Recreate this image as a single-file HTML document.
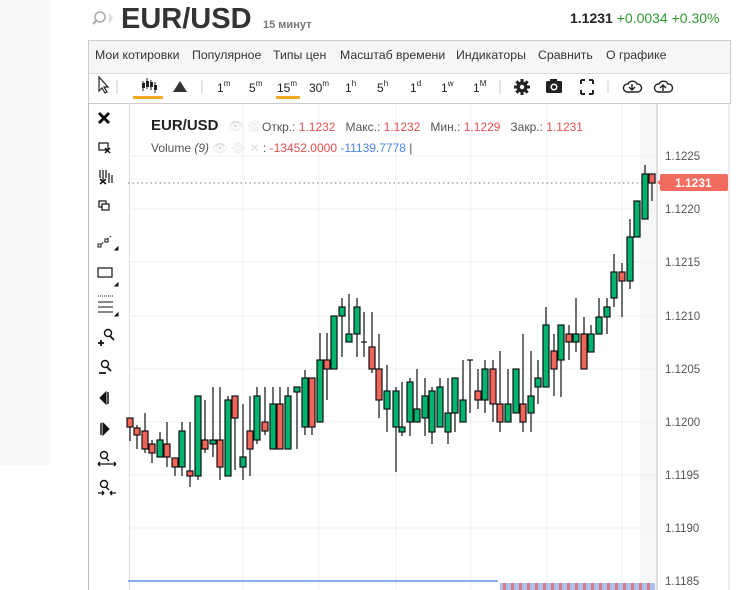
<!DOCTYPE html>
<html><head><meta charset="utf-8"><style>
body{margin:0;width:751px;height:590px;overflow:hidden;background:#fff;font-family:"Liberation Sans",sans-serif;position:relative}
.a{position:absolute;white-space:nowrap}
.m{position:absolute;top:48px;font-size:12.3px;color:#333;white-space:nowrap}
</style></head><body>
<div class="a" style="left:0;top:0;width:51px;height:465px;background:#f8f8f8"></div>
<svg class="a" style="left:92px;top:9px" width="30" height="20"><circle cx="8" cy="8" r="5" fill="none" stroke="#aaa" stroke-width="1.5"/><line x1="4.5" y1="11.5" x2="1" y2="15" stroke="#aaa" stroke-width="2"/><path d="M17 3 L21 9 L17 15 Z" fill="#ddd"/></svg>
<div class="a" style="left:121px;top:3px;font-size:29px;font-weight:bold;color:#333">EUR/USD</div>
<div class="a" style="left:263px;top:19px;font-size:11px;font-weight:bold;color:#777">15 минут</div>
<div class="a" style="left:570px;top:10px;font-size:14px;font-weight:bold;color:#222">1.1231 <span style="font-weight:normal;color:#2e9b2e">+0.0034 +0.30%</span></div>
<div class="a" style="left:88px;top:40px;width:641px;height:32px;background:#f6f6f6;border:1px solid #ccc;border-bottom:1px solid #ddd"></div>
<div class="m" style="left:95px">Мои котировки</div>
<div class="m" style="left:192px">Популярное</div>
<div class="m" style="left:273px">Типы цен</div>
<div class="m" style="left:340px">Масштаб времени</div>
<div class="m" style="left:456px">Индикаторы</div>
<div class="m" style="left:538px">Сравнить</div>
<div class="m" style="left:606px">О графике</div>
<div class="a" style="left:88px;top:73px;width:641px;height:30px;border-left:1px solid #ccc;border-right:1px solid #ccc;border-bottom:1px solid #ccc"></div>
<div class="a" style="left:88px;top:103px;width:40px;height:487px;border-left:1px solid #bbb;border-right:1px solid #ddd"></div>
<svg class="a" style="left:0;top:72px" width="751" height="32">
<path d="M99 5 L99 19 L102 16 L105 21 L107 20 L104 15 L108 15 Z" fill="#fff" stroke="#222" stroke-width="1.2"/>
<g stroke="#ccc"><line x1="117" y1="8" x2="117" y2="22"/><line x1="202" y1="8" x2="202" y2="22"/><line x1="500" y1="8" x2="500" y2="22"/><line x1="608" y1="8" x2="608" y2="22"/></g>
<g stroke="#222"><line x1="143" y1="9" x2="143" y2="19"/><line x1="147" y1="6" x2="147" y2="17"/><line x1="151" y1="8" x2="151" y2="18"/><line x1="155" y1="10" x2="155" y2="21"/></g>
<g fill="#222"><rect x="142" y="11" width="3" height="5"/><rect x="146" y="9" width="3" height="6"/><rect x="150" y="10" width="3" height="5"/><rect x="154" y="13" width="3" height="5"/></g>
<rect x="133" y="24" width="30" height="3" fill="#f5a623"/>
<path d="M173 20 L180 9 L187 20 Z" fill="#333"/>
<rect x="276" y="24" width="24" height="3" fill="#f5a623"/>
<g font-size="12" fill="#222" font-family="Liberation Sans"><text x="217" y="20">1<tspan font-size="8" dy="-6">m</tspan></text><text x="249" y="20">5<tspan font-size="8" dy="-6">m</tspan></text><text x="277" y="20">15<tspan font-size="8" dy="-6">m</tspan></text><text x="309" y="20">30<tspan font-size="8" dy="-6">m</tspan></text><text x="345" y="20">1<tspan font-size="8" dy="-6">h</tspan></text><text x="377" y="20">5<tspan font-size="8" dy="-6">h</tspan></text><text x="410" y="20">1<tspan font-size="8" dy="-6">d</tspan></text><text x="441" y="20">1<tspan font-size="8" dy="-6">w</tspan></text><text x="473" y="20">1<tspan font-size="8" dy="-6">M</tspan></text></g>
<g fill="#222"><circle cx="522" cy="15" r="5.5"/><rect x="520.5" y="7" width="3" height="16"/><rect x="514" y="13.5" width="16" height="3"/><rect x="520.5" y="7" width="3" height="16" transform="rotate(45 522 15)"/><rect x="520.5" y="7" width="3" height="16" transform="rotate(-45 522 15)"/></g><circle cx="522" cy="15" r="2.2" fill="#fff"/>
<rect x="546" y="9" width="16" height="12" rx="1.5" fill="#222"/><rect x="550" y="7" width="7" height="3" fill="#222"/><circle cx="554" cy="15" r="3.5" fill="#fff"/><circle cx="554" cy="15" r="2" fill="#222"/>
<g stroke="#222" stroke-width="2"><path d="M581 8v4M581 8h4M593 8v4M593 8h-4M581 22v-4M581 22h4M593 22v-4M593 22h-4"/></g>
<g fill="none" stroke="#222" stroke-width="1.4"><path d="M627 20 a4 4 0 0 1 1-8 a5 5 0 0 1 9 0 a4 4 0 0 1 1 8 Z"/><path d="M658 20 a4 4 0 0 1 1-8 a5 5 0 0 1 9 0 a4 4 0 0 1 1 8 Z"/></g>
<path d="M632 12v6M629 15l3 3 3-3" stroke="#222" fill="none" stroke-width="1.4"/><path d="M663 19v-6M660 16l3-3 3 3" stroke="#222" fill="none" stroke-width="1.4"/>
</svg>
<svg class="a" style="left:88px;top:103px" width="40" height="487" stroke="#111" fill="none">
<path d="M11 10l10 10M21 10l-10 10" stroke-width="3"/>
<rect x="11" y="40" width="9" height="7" stroke-width="1.2"/><path d="M17 45l5 5M22 45l-5 5" stroke-width="1.5"/>
<path d="M12 67v8M15 67v10M18 67v8M21 70v10M24 72v8" stroke-width="1.2"/><path d="M12 76l6 5M18 76l-6 5" stroke-width="1.5"/>
<rect x="11" y="98" width="7" height="6" stroke-width="1.2"/><rect x="14" y="101" width="7" height="6" fill="#fff" stroke-width="1.2"/>
<path d="M11 143l12-10" stroke-width="1" stroke-dasharray="2 1.5"/><rect x="10" y="141" width="3" height="3" fill="#fff"/><rect x="17" y="136" width="3" height="3" fill="#fff"/><path d="M27 147l3-3v3z" fill="#111"/>
<rect x="10" y="165" width="14" height="9" stroke-width="1.2"/><path d="M27 183l3-3v3z" fill="#111"/>
<path d="M10 193h15" stroke-dasharray="1 1"/><path d="M10 199h15M10 204h15M10 209h15"/><path d="M27 213l3-3v3z" fill="#111"/>
<circle cx="20" cy="230" r="3.5" stroke-width="1.4"/><path d="M22 233l4 4M10 240h6M13 237v6" stroke-width="1.8"/>
<circle cx="17" cy="261" r="3.5" stroke-width="1.4"/><path d="M19 264l4 4M11 270h7" stroke-width="1.8"/>
<path d="M18 289v12l-6-6z" fill="#111"/><path d="M20 289v12" stroke-width="1.5"/>
<path d="M15 320v12l6-6z" fill="#111"/><path d="M13 320v12" stroke-width="1.5"/>
<circle cx="16" cy="352" r="3.5" stroke-width="1.4"/><path d="M18 355l3 3M10 361h18M10 361l2-2M10 361l2 2M28 361l-2-2M28 361l-2 2" stroke-width="1.3"/>
<circle cx="16" cy="381" r="3.5" stroke-width="1.4"/><path d="M18 384l3 3M10 390h6M22 390h6M16 390l-2-2M16 390l-2 2M22 390l2-2M22 390l2 2" stroke-width="1.3"/>
</svg>
<svg class="a" style="left:0;top:0" width="751" height="590">
<rect x="640" y="104" width="17" height="486" fill="#f7f7f7"/>
<g stroke="#efefef"><line x1="243" y1="104" x2="243" y2="590"/><line x1="319" y1="104" x2="319" y2="590"/><line x1="396" y1="104" x2="396" y2="590"/><line x1="471" y1="104" x2="471" y2="590"/><line x1="547" y1="104" x2="547" y2="590"/><line x1="622" y1="104" x2="622" y2="590"/>
<line x1="128" y1="156" x2="657" y2="156"/><line x1="128" y1="209" x2="657" y2="209"/><line x1="128" y1="262" x2="657" y2="262"/><line x1="128" y1="316" x2="657" y2="316"/><line x1="128" y1="369" x2="657" y2="369"/><line x1="128" y1="422" x2="657" y2="422"/><line x1="128" y1="475" x2="657" y2="475"/><line x1="128" y1="528" x2="657" y2="528"/></g>
<line x1="657" y1="104" x2="657" y2="590" stroke="#ddd" stroke-width="2"/>
<line x1="729" y1="104" x2="729" y2="590" stroke="#ddd"/>
<line x1="128" y1="183" x2="657" y2="183" stroke="#777" stroke-dasharray="1.5 3"/>
<rect x="660" y="174" width="68" height="17" rx="2" fill="#f26b5f"/><path d="M660 180l-3 2.5 3 2.5z" fill="#f26b5f"/>
<text x="675" y="187" font-size="12" font-weight="bold" fill="#fff" font-family="Liberation Sans">1.1231</text>
<g font-size="11.5" fill="#555" font-family="Liberation Sans"><text x="665" y="160">1.1225</text><text x="665" y="213">1.1220</text><text x="665" y="266">1.1215</text><text x="665" y="320">1.1210</text><text x="665" y="373">1.1205</text><text x="665" y="426">1.1200</text><text x="665" y="479">1.1195</text><text x="665" y="532">1.1190</text><text x="665" y="585">1.1185</text></g>
<rect x="128" y="580" width="370" height="2" fill="#6a9be8" opacity=".8"/>
<rect x="500" y="583" width="155" height="7" fill="#a9c2ef"/>
<g fill="#d97a80"><rect x="503" y="583" width="3" height="7"/><rect x="511" y="583" width="3" height="7"/><rect x="519" y="583" width="3" height="7"/><rect x="527" y="583" width="3" height="7"/><rect x="535" y="583" width="3" height="7"/><rect x="543" y="583" width="3" height="7"/><rect x="551" y="583" width="3" height="7"/><rect x="559" y="583" width="3" height="7"/><rect x="567" y="583" width="3" height="7"/><rect x="575" y="583" width="3" height="7"/><rect x="583" y="583" width="3" height="7"/><rect x="591" y="583" width="3" height="7"/><rect x="599" y="583" width="3" height="7"/><rect x="607" y="583" width="3" height="7"/><rect x="615" y="583" width="3" height="7"/><rect x="623" y="583" width="3" height="7"/><rect x="631" y="583" width="3" height="7"/><rect x="639" y="583" width="3" height="7"/><rect x="647" y="583" width="3" height="7"/></g>
<g id="c" stroke="#111" stroke-width="1.2"></g>
</svg>
<div class="a" style="left:151px;top:117px;font-size:15px;font-weight:bold;color:#222">EUR/USD</div>
<div class="a" style="left:228px;top:119px;font-size:12px;color:#ddd">👁 ⚙</div>
<div class="a" style="left:262px;top:120px;font-size:12px;color:#555">Откр.: <span style="color:#e05050">1.1232</span>&nbsp;&nbsp; Макс.: <span style="color:#e05050">1.1232</span>&nbsp;&nbsp; Мин.: <span style="color:#e05050">1.1229</span>&nbsp;&nbsp; Закр.: <span style="color:#e05050">1.1231</span></div>
<div class="a" style="left:151px;top:141px;font-size:12px;color:#555">Volume <i>(9)</i> <span style="color:#ddd">👁 ⚙ ✕</span> : <span style="color:#e05050">-13452.0000</span> <span style="color:#4a86e8">-11139.7778</span> |</div>
<script>
var d=[[130,418,427,418,441,0],[137,428,435,425,449,0],[145,431,449,413,453,0],[152,444,453,440,463,0],[160,440,457,432,457,1],[167,444,457,422,467,0],[175,458,467,458,476,0],[182,431,467,422,476,1],[190,471,476,422,487,0],[198,396,476,396,480,1],[205,440,449,400,453,0],[213,440,444,387,457,1],[220,440,467,387,480,0],[228,400,476,396,476,1],[235,396,418,396,470,0],[243,457,467,404,480,1],[250,431,449,396,476,0],[257,396,440,387,444,1],[265,422,431,387,435,0],[273,404,449,387,449,1],[280,404,449,387,449,0],[288,396,449,387,449,1],[297,387,392,387,449,1],[305,378,427,370,435,1],[312,378,427,378,435,0],[320,360,422,333,422,1],[327,360,369,333,400,0],[334,316,369,316,369,1],[342,307,316,298,357,1],[349,334,342,294,342,1],[357,307,334,298,357,1],[364,342,342,312,357,2],[372,347,369,312,373,0],[379,369,400,334,418,0],[387,391,409,365,432,1],[396,391,427,387,472,1],[402,427,432,382,436,1],[410,382,422,378,436,1],[417,409,422,369,422,1],[425,396,418,378,436,1],[432,391,432,387,444,1],[440,387,427,378,427,1],[448,413,432,378,444,1],[455,378,413,378,432,1],[463,400,422,360,422,1],[470,360,360,360,413,2],[478,391,400,369,409,0],[485,369,400,360,413,1],[493,369,404,360,422,0],[500,404,422,351,432,0],[508,404,422,369,422,1],[516,369,413,369,413,1],[523,404,422,334,432,0],[531,396,413,351,432,1],[538,378,387,360,404,1],[546,325,387,307,387,1],[554,351,369,334,396,0],[561,325,360,325,397,1],[569,334,342,325,360,0],[576,334,342,298,352,1],[584,334,369,317,369,0],[591,334,352,325,352,1],[599,317,334,298,334,1],[607,307,317,298,334,1],[614,272,298,254,307,1],[622,272,281,263,317,0],[630,237,281,219,289,1],[637,201,237,201,237,1],[645,174,219,165,219,1],[652,174,183,174,201,0]];
var s='';d.forEach(function(c){s+='<line x1="'+c[0]+'" y1="'+c[3]+'" x2="'+c[0]+'" y2="'+c[4]+'"/>';if(c[5]==2)s+='<line x1="'+(c[0]-3)+'" y1="'+c[1]+'" x2="'+(c[0]+3)+'" y2="'+c[1]+'"/>';else s+='<rect x="'+(c[0]-3)+'" y="'+c[1]+'" width="6" height="'+Math.max(c[2]-c[1],2)+'" fill="'+(c[5]?'#00b46e':'#f0645a')+'"/>';});
document.getElementById('c').innerHTML=s;
</script>
</body></html>
